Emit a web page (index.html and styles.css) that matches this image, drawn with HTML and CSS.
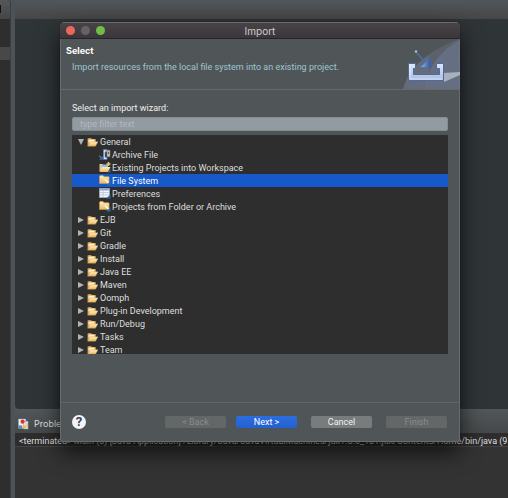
FILE: index.html
```
<!DOCTYPE html>
<html lang="en">
<head>
  <meta charset="UTF-8">
  <title>Import</title>
  <link rel="stylesheet" href="styles.css">
</head>
<body>

<svg class="defs" aria-hidden="true">
  <defs>
    <linearGradient id="gold" x1="0" y1="0" x2="0" y2="1">
      <stop offset="0" stop-color="#fff0bd"/><stop offset="1" stop-color="#e9b860"/>
    </linearGradient>
    <linearGradient id="tray" x1="0" y1="0" x2="0" y2="1">
      <stop offset="0" stop-color="#dfe6f6"/><stop offset="1" stop-color="#a9bbe0"/>
    </linearGradient>
    <linearGradient id="head" x1="0" y1="0" x2="1" y2="0">
      <stop offset="0" stop-color="#a9bde4"/><stop offset="1" stop-color="#2f57a0"/>
    </linearGradient>
  </defs>
  <symbol id="open-folder" viewBox="0 0 11 10">
    <path d="M.5 8.500V2q0-1 1-1H4l1 1h3q1 0 1 1v2" fill="#c98f45"/>
    <path d="M1.500 2.500h6V5h-5l-1 2z" fill="#fff1cb"/>
    <path d="M.5 9.200 3 4.800h8L8.500 9.200z" fill="url(#gold)" stroke="#c98f45" stroke-width=".4"/>
  </symbol>
  <symbol id="folder-import" viewBox="0 0 12 11">
    <path d="M.5 8.500V1.500q0-1 1-1H4l1 1.200h4.500q.6 0 .6.6v6.200z" fill="url(#gold)" stroke="#d09f50" stroke-width=".6"/>
    <path d="m6 4.500 4 4" stroke="#fff" stroke-width="1.300"/>
    <path d="M11.500 6v4.500H7z" fill="#286da8"/>
  </symbol>
  <symbol id="archive" viewBox="0 0 12 11">
    <path d="M4.500.8h3.500v2H6v5.500h2v2H4.500z" fill="#e5ecf8" stroke="#6987bd" stroke-width=".8"/>
    <path d="M8 1.200h3v6.500H8z" fill="#dcc68e" stroke="#65819f" stroke-width=".6"/>
    <path d="M9 3h1v2H9z" fill="#465b75"/>
    <path d="m0 6.500 3 3" stroke="#b9cce0" stroke-width=".8"/>
    <path d="M3.800 6.800v4H0z" fill="#2d73ad"/>
  </symbol>
  <symbol id="existing" viewBox="0 0 12 11">
    <path d="M.5 9.500V2h3l1 1H9v6z" fill="#e8c88c"/>
    <path d="M2.500 2.500h6V6h-6z" fill="#8db9e5"/>
    <path d="M.8 10 3 5h8.500L9 10z" fill="url(#gold)"/>
    <path d="M9.500 0v4M7.500 2h4" stroke="#e5c477" stroke-width="1.500"/>
    <path d="M11.500 7v3.500H8z" fill="#286da8"/>
  </symbol>
  <symbol id="preferences" viewBox="0 0 12 11">
    <path d="M.5.500h10v9H.5z" fill="#f4f6fa" stroke="#9cafce" stroke-width=".7"/>
    <path d="M1 1h9.300v1.500H1z" fill="#8da6d0"/>
    <path d="M1 4.500h9M1 6.800h9M4 2.500v7" stroke="#a9b5ca" stroke-width=".6"/>
    <path d="M11.500 6.500v4H7z" fill="#286da8"/>
  </symbol>
</svg>

<div class="workbench">
  <aside class="sidebar">
    <div class="sidebar-head"><span></span></div>
    <div class="sidebar-row"></div>
  </aside>
  <main class="panes">
    <div class="editor">
      <div class="editor-tabs"></div>
      <div class="editor-body"></div>
    </div>
    <section class="console">
      <div class="console-tab">
        <svg class="problem-icon" viewBox="0 0 12 12" aria-hidden="true">
          <path d="M.5.500h8v10h-8zM6 3h5v8.500H6z" fill="#edf1f8" stroke="#8798b5" stroke-width=".5"/>
          <path d="M.5 7.500h4v4h-4z" fill="#6686ba"/>
          <circle cx="5" cy="3.500" r="2.300" fill="#dc3034"/>
          <path d="m6.500 6 2.500 4.500H4z" fill="#edbd38"/>
          <path d="M10 5v5" stroke="#e0a33e"/>
        </svg>
        <span>Problems</span>
      </div>
      <div class="console-status">
        <span>&lt;terminated&gt; Main (3) [Java Application] /Library/Java/JavaVirtualMachines/jdk1.8.0_181.jdk/Contents/Home/bin/java (9 J</span>
      </div>
    </section>
  </main>
</div>

<div class="dialog" role="dialog" aria-labelledby="dialogTitle">
  <div class="titlebar">
    <div class="lights">
      <button class="light close" aria-label="Close"></button>
      <button class="light minimize" aria-label="Minimize" disabled></button>
      <button class="light zoom" aria-label="Zoom"></button>
    </div>
    <div id="dialogTitle">Import</div>
  </div>

  <header class="banner">
    <div class="banner-text">
      <h1>Select</h1>
      <p>Import resources from the local file system into an existing project.</p>
    </div>
    <svg class="banner-art" viewBox="0 0 58 50" aria-hidden="true">
      <path d="M1 50Q7 27 29 14T58 0V50z" fill="#6a7488" opacity=".45"/>
      <path d="M23 50Q27 18 58 1V50z" fill="#74819d" opacity=".45"/>
      <path d="M1 50Q8 28 27 17 29 36 23 50z" fill="#7683a0" opacity=".3"/>
      <path d="M42 34 58 33V36L42 43z" fill="#c8ccd5" opacity=".7"/>
      <path d="M6.500 24.500h7v5h-2v6h26v-6h-3v-5h7v17h-35z" fill="url(#tray)" stroke="#4b6ba5"/>
      <path d="M8 26v14h32" fill="none" stroke="#fff" opacity=".6"/>
      <path d="m14 13 9 10" stroke="#4a70ae" stroke-width="1.500"/>
      <circle cx="14" cy="12.500" r="1.200" fill="#b2c0d7"/>
      <path d="M28.500 18v10.500H18z" fill="url(#head)" stroke="#4468a6" stroke-width=".7"/>
    </svg>
  </header>

  <div class="wizard">
    <label for="filter">Select an import wizard:</label>
    <input type="text" id="filter" placeholder="type filter text">
    <ul class="tree" role="tree">
      <li class="row open" role="treeitem" aria-expanded="true"><i class="arrow"></i><svg class="folder"><use href="#open-folder"/></svg>General</li>
      <li class="row child" role="treeitem"><svg class="icon"><use href="#archive"/></svg>Archive File</li>
      <li class="row child" role="treeitem"><svg class="icon"><use href="#existing"/></svg>Existing Projects into Workspace</li>
      <li class="row child selected" role="treeitem" aria-selected="true"><svg class="icon"><use href="#folder-import"/></svg>File System</li>
      <li class="row child" role="treeitem"><svg class="icon"><use href="#preferences"/></svg>Preferences</li>
      <li class="row child" role="treeitem"><svg class="icon"><use href="#folder-import"/></svg>Projects from Folder or Archive</li>
      <li class="row" role="treeitem"><i class="arrow"></i><svg class="folder"><use href="#open-folder"/></svg>EJB</li>
      <li class="row" role="treeitem"><i class="arrow"></i><svg class="folder"><use href="#open-folder"/></svg>Git</li>
      <li class="row" role="treeitem"><i class="arrow"></i><svg class="folder"><use href="#open-folder"/></svg>Gradle</li>
      <li class="row" role="treeitem"><i class="arrow"></i><svg class="folder"><use href="#open-folder"/></svg>Install</li>
      <li class="row" role="treeitem"><i class="arrow"></i><svg class="folder"><use href="#open-folder"/></svg>Java EE</li>
      <li class="row" role="treeitem"><i class="arrow"></i><svg class="folder"><use href="#open-folder"/></svg>Maven</li>
      <li class="row" role="treeitem"><i class="arrow"></i><svg class="folder"><use href="#open-folder"/></svg>Oomph</li>
      <li class="row" role="treeitem"><i class="arrow"></i><svg class="folder"><use href="#open-folder"/></svg>Plug-in Development</li>
      <li class="row" role="treeitem"><i class="arrow"></i><svg class="folder"><use href="#open-folder"/></svg>Run/Debug</li>
      <li class="row" role="treeitem"><i class="arrow"></i><svg class="folder"><use href="#open-folder"/></svg>Tasks</li>
      <li class="row" role="treeitem"><i class="arrow"></i><svg class="folder"><use href="#open-folder"/></svg>Team</li>
    </ul>
  </div>

  <footer class="actions">
    <button class="help" aria-label="Help">?</button>
    <div class="nav">
      <button class="btn" disabled>&lt; Back</button>
      <button class="btn primary">Next &gt;</button>
    </div>
    <button class="btn">Cancel</button>
    <button class="btn" disabled>Finish</button>
  </footer>
</div>

</body>
</html>
```
FILE: styles.css
```
* {
  box-sizing: border-box;
}
body {
  margin: 0;
  height: 100vh;
  overflow: hidden;
  background: #4c5357;
  color: #dedfdf;
  font-family: Roboto, "Liberation Sans", sans-serif;
  font-size: 9px;
  line-height: 12px;
}
button, input {
  font: inherit;
  border: none;
  padding: 0;
  margin: 0;
}
.defs {
  position: absolute;
  width: 0;
  height: 0;
}

/* workbench behind the dialog */
.workbench {
  display: flex;
  gap: 4px;
  height: 100%;
}
.sidebar {
  width: 11px;
  background: #2e2e2e;
  border-top-right-radius: 4px;
  border-right: 1px solid #3b3f41;
  overflow: hidden;
}
.sidebar-head {
  height: 19px;
  padding-top: 5px;
  background: linear-gradient(#53585a, #454545);
}
.sidebar-head span {
  display: block;
  width: 1px;
  height: 8px;
  background: #111;
}
.sidebar-row {
  height: 13px;
  margin-top: 28px;
  background: #484848;
}
.panes {
  flex: 1;
  min-width: 0;
  display: flex;
  flex-direction: column;
}
.editor {
  flex: 1;
  display: flex;
  flex-direction: column;
  border-bottom-left-radius: 4px;
  overflow: hidden;
}
.editor-tabs {
  height: 19px;
  background: linear-gradient(#50575a, #464646);
}
.editor-body {
  flex: 1;
  background: #2f3437;
}
.console {
  height: 89px;
  background: #333;
}
.console-tab {
  display: flex;
  align-items: center;
  gap: 5px;
  height: 24px;
  padding: 6px 3px 0;
  background: linear-gradient(#50575a, #464849);
  font-family: Inter, sans-serif;
}
.problem-icon {
  width: 11px;
  height: 12px;
}
.console-status {
  height: 14px;
  padding: 2px 0 0 4px;
  background: #2d2d2d;
  border-bottom: 1px solid #444;
  white-space: nowrap;
}

/* dialog window */
.dialog {
  position: absolute;
  top: 22px;
  left: 60px;
  right: 48px;
  background: #505557;
  border-radius: 5px 5px 3px 3px;
  box-shadow: 0 0 1px #111, 0 10px 22px rgba(0, 0, 0, 0.7), inset 0 0 0 1px #686c6e;
  overflow: hidden;
}
.titlebar {
  display: grid;
  grid-template-columns: 1fr auto 1fr;
  align-items: center;
  height: 17px;
  padding: 0 6px;
  background: linear-gradient(#484347, #3a363a);
  border-top: 1px solid #6d696c;
  border-bottom: 1px solid #252427;
  font-family: Inter, sans-serif;
  font-size: 10px;
  color: #d0cdd0;
}
.lights {
  display: flex;
  gap: 6px;
}
.light {
  width: 9px;
  height: 9px;
  border-radius: 50%;
}
.close {
  background: #ed675d;
}
.minimize {
  background: #656166;
}
.zoom {
  background: #70bd47;
}
.banner {
  display: flex;
  justify-content: space-between;
  height: 51px;
  border-bottom: 1px solid #656a6c;
}
.banner-text {
  padding: 6px 6px 0;
}
.banner h1 {
  margin: 0;
  font-family: Inter, sans-serif;
  font-size: 9px;
  line-height: 12px;
  color: #fff;
}
.banner p {
  margin: 4px 6px 0;
  color: #9dc5d2;
}
.banner-art {
  width: 58px;
  height: 50px;
}
.wizard {
  padding: 12px 12px 0;
}
.wizard label {
  display: block;
  color: #eee;
}
#filter {
  display: block;
  width: 100%;
  height: 14px;
  margin-top: 3px;
  padding: 0 7px;
  background: #929aa2;
  border: 1px solid #858c92;
  border-radius: 2px;
}
#filter::placeholder {
  color: #b3b8be;
  opacity: 1;
}
.tree {
  height: 219px;
  margin: 4px 0 0;
  padding: 0;
  background: #2e2e2e;
  list-style: none;
  overflow: hidden;
}
.row {
  display: flex;
  align-items: center;
  height: 13px;
  padding-left: 6px;
}
.child {
  padding-left: 27px;
}
.selected {
  background: #1759ca;
  color: #fff;
}
.arrow {
  border-left: 6px solid #b2b2b2;
  border-top: 3px solid transparent;
  border-bottom: 3px solid transparent;
}
.open .arrow {
  border-top: 6px solid #b2b2b2;
  border-left: 3px solid transparent;
  border-right: 3px solid transparent;
  border-bottom: none;
}
.folder {
  width: 11px;
  height: 10px;
  margin: 0 2px 0 3px;
}
.icon {
  width: 12px;
  height: 11px;
  margin-right: 1px;
}
.actions {
  display: flex;
  align-items: center;
  gap: 14px;
  height: 40px;
  margin-top: 48px;
  padding: 0 13px 2px 12px;
  border-top: 1px solid #5f6466;
}
.help {
  width: 14px;
  height: 14px;
  margin-right: auto;
  border-radius: 50%;
  background: #f4f4f6;
  color: #34405f;
  font-size: 13px;
  font-weight: 700;
  line-height: 14px;
}
.nav {
  display: flex;
  gap: 10px;
}
.btn {
  width: 61px;
  height: 12px;
  border-radius: 2px;
  background: #797c7d;
  color: #f2f2f2;
}
.btn:disabled {
  background: #636768;
  color: #898c8d;
}
.primary {
  background: linear-gradient(#2c6de0, #2460ce);
  color: #fff;
}
```
